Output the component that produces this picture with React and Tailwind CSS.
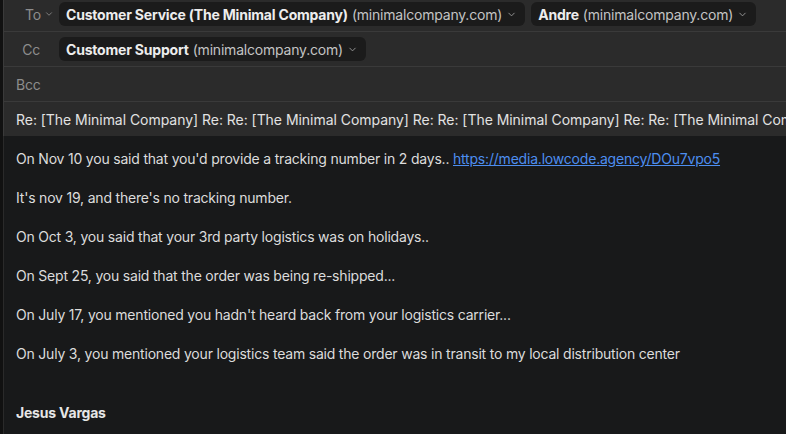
import React from "react";
import { ChevronDown } from "lucide-react";

const Chip = ({ name, domain }) => (
  <div className="flex items-center h-[24px] rounded-md bg-[#1b1b1b] pl-[7px] pr-[8px] text-[14px] whitespace-nowrap">
    <span className="font-bold text-[#ededed]">{name}</span>
    <span className="ml-[4px] text-[#c4c4c4]">{domain}</span>
    <ChevronDown size={11} strokeWidth={2} className="ml-[4px] text-[#9a9a9a]" />
  </div>
);

const lines = [
  "It's nov 19, and there's no tracking number.",
  "On Oct 3, you said that your 3rd party logistics was on holidays..",
  "On Sept 25, you said that the order was being re-shipped...",
  "On July 17, you mentioned you hadn't heard back from your logistics carrier...",
  "On July 3, you mentioned your logistics team said the order was in transit to my local distribution center",
];

export default function App() {
  return (
    <div
      className="w-[786px] h-[434px] overflow-hidden flex flex-col bg-[#18191a] border-l-[3px] border-[#111111] tracking-[-0.2px]"
      style={{ fontFamily: "Inter, 'Noto Sans', sans-serif" }}
    >
      {/* Header */}
      <div className="bg-[#2b2b2b] border-l border-[#3a3a3a]">
        <div className="h-[32px] flex items-start pt-[2px] border-b border-[#3a3a3a]">
          <div className="w-[52px] flex items-center justify-end pr-[2px] h-[24px] text-[14px] text-[#8d8d8d]">
            <span>To</span>
            <ChevronDown size={10} className="ml-[3px] text-[#8d8d8d]" />
          </div>
          <div className="flex gap-[6px] ml-[3px]">
            <Chip name="Customer Service (The Minimal Company)" domain="(minimalcompany.com)" />
            <Chip name="Andre" domain="(minimalcompany.com)" />
          </div>
        </div>
        <div className="h-[35px] flex items-center border-b border-[#3a3a3a]">
          <div className="w-[36px] text-right text-[14px] text-[#8d8d8d]">Cc</div>
          <div className="ml-[19px]">
            <Chip name="Customer Support" domain="(minimalcompany.com)" />
          </div>
        </div>
        <div className="h-[35px] flex items-center border-b border-[#3a3a3a] pl-[12px] text-[14px] text-[#8d8d8d]">
          Bcc
        </div>
        <div className="h-[34px] flex items-center pl-[12px] text-[14px] tracking-[-0.04px] text-[#e2e2e2] whitespace-nowrap overflow-hidden">
          Re: [The Minimal Company] Re: Re: [The Minimal Company] Re: Re: [The Minimal Company] Re: Re: [The Minimal Company] Re: Re: [The Minimal Company]
        </div>
      </div>

      {/* Body */}
      <div className="flex-1 border-l border-[#2a2a2a] pl-[12px] pt-[13px] text-[14px] leading-[20px] text-[#dcdcdc]">
        <p className="mb-[19px] whitespace-nowrap">
          On Nov 10 you said that you'd provide a tracking number in 2 days..{" "}
          <a href="#" className="text-[#4d8ef0] underline">https://media.lowcode.agency/DOu7vpo5</a>
        </p>
        {lines.map((l) => (
          <p key={l} className="mb-[19px] whitespace-nowrap">{l}</p>
        ))}
        <p className="mt-[39px] font-bold text-[#e6e6e6]">Jesus Vargas</p>
      </div>
    </div>
  );
}
